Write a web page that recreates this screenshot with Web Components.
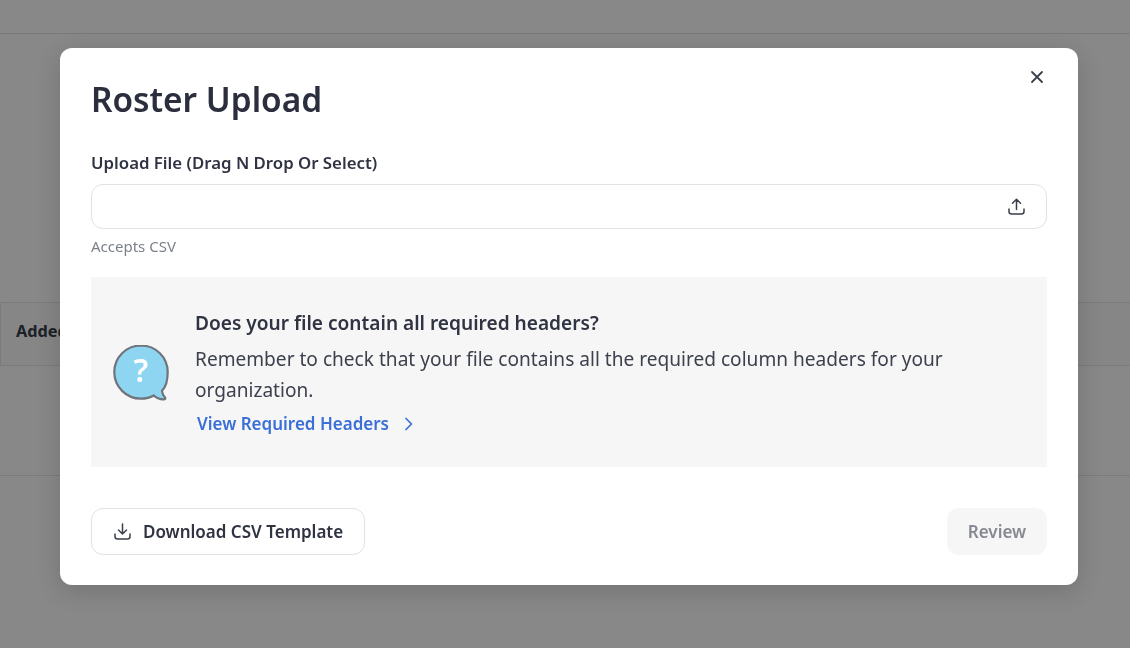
<!DOCTYPE html>
<html><head><meta charset="utf-8">
<style>
html,body{margin:0;height:100%;overflow:hidden;background:#fff;font-family:"Noto Sans","Liberation Sans",sans-serif;color:#2b2f3d}
</style></head><body>
<page-behind></page-behind>
<modal-overlay>
  <roster-modal></roster-modal>
</modal-overlay>
<script>
const F='"Noto Sans",sans-serif';
function def(name,html){
  customElements.define(name,class extends HTMLElement{
    constructor(){super();this.attachShadow({mode:'open'}).innerHTML=html;}
  });
}
def('page-behind',`<style>
:host{display:block;width:1130px;height:648px;box-sizing:border-box;background:#fff}
.top{height:33px;border-bottom:1px solid #e0e0e0;box-sizing:content-box}
.gap1{height:268px}
.row{border:1px solid #e4e4e4;border-right:0;background:#fafafa;display:flex;align-items:center;padding:0 0 6px 15px;box-sizing:content-box;height:56px;font:700 16.300px ${F};color:#2b2f3d}
.gap2{height:109px;border-bottom:1px solid #e4e4e4}
</style><div class="top"></div><div class="gap1"></div><div class="row">Added</div><div class="gap2"></div>`);
def('modal-overlay',`<style>
:host{position:fixed;inset:0;background:rgba(17,17,17,.5);display:flex;align-items:flex-start;justify-content:flex-start;padding:48px 0 0 60px;box-sizing:border-box}
</style><slot></slot>`);
def('icon-btn',`<style>:host{display:inline-flex;color:#2f3342}</style><slot></slot>`);
def('notice-box',`<style>
:host{display:flex;align-items:center;background:#f6f6f6;height:190px;box-sizing:border-box;padding:0 22px;gap:26px}
.txt{display:flex;flex-direction:column;padding-top:1px}
.h{font:600 19.100px/26px ${F};color:#2f3342}
.p{font:400 19.100px/31px ${F};color:#3d414d;width:800px;margin-top:8px}
.a{display:flex;align-items:center;gap:15px;font:600 17px/24px ${F};color:#3a6fd8;margin:6px 0 0 2px}
svg{display:block;flex:none}
.bubble{margin-top:2px}
</style>
<svg class="bubble" width="56" height="58" viewBox="0 0 56 58"><path d="M28 1.500C13.200 1.500 1.300 13.300 1.300 28S13.200 54.700 28 54.700c4.800 0 9.100-1.100 12.800-3.200 2.400 2.500 6 4 10.400 3.800 1.100-.1 1.500-1.100.8-1.900-1.700-1.800-2.900-3.800-3-6.600C53.500 42.400 54.700 35.400 54.700 28 54.700 13.300 42.800 1.500 28 1.500Z" fill="#8ed5f2" stroke="#6f747c" stroke-width="2.200"/><text x="28" y="38" text-anchor="middle" font-family="Noto Sans,sans-serif" font-weight="600" font-size="32" fill="#fff">?</text></svg>
<div class="txt"><div class="h">Does your file contain all required headers?</div>
<div class="p">Remember to check that your file contains all the required column headers for your organization.</div>
<div class="a">View Required Headers <svg width="10" height="14" viewBox="0 0 10 14" fill="none" stroke="#3a6fd8" stroke-width="1.700" stroke-linecap="round" stroke-linejoin="round"><path d="M2 1.500 7.500 7 2 12.500"/></svg></div></div>`);
def('roster-modal',`<style>
:host{display:flex;flex-direction:column;width:1018px;height:537px;box-sizing:border-box;background:#fff;border-radius:12px;padding:28px 31px 30px;position:relative;box-shadow:0 6px 24px rgba(0,0,0,.16)}
h1{margin:0;font:600 33.400px/46px ${F};color:#2b2f3d}
.close{position:absolute;top:21px;right:33px;width:16px;height:16px}
label{display:block;margin-top:31px;font:600 16.800px/20px ${F};color:#2f3342}
.input{margin-top:11px;height:45px;box-sizing:border-box;border:1.500px solid #e2e2e4;border-radius:12px;display:flex;align-items:center;justify-content:flex-end;padding-right:20px}
.hint{font:400 15px/18px ${F};color:#7c808a;margin:8px 0 22px}
.foot{margin-top:auto;display:flex;justify-content:space-between;align-items:flex-end}
.btn{height:47px;box-sizing:border-box;border-radius:12px;display:flex;align-items:center;white-space:nowrap;font:600 17px/20px ${F}}
.dl{border:1.500px solid #e2e2e4;width:274px;padding:0 0 0 21px;gap:11px;color:#2f3342}
.rv{background:#f6f6f6;color:#868991;width:100px;justify-content:center}
svg{display:block}
</style>
<h1>Roster Upload</h1>
<icon-btn class="close"><svg width="16" height="16" viewBox="0 0 16 16" fill="none" stroke="#3b3f4b" stroke-width="1.800" stroke-linecap="round"><path d="M3 3l10 10M13 3 3 13"/></svg></icon-btn>
<label>Upload File (Drag N Drop Or Select)</label>
<div class="input"><svg width="19" height="19" viewBox="0 0 19 19" fill="none" stroke="#3b3f4b" stroke-width="1.500" stroke-linecap="round" stroke-linejoin="round"><path d="M9.500 12.500V2.500M5.500 6.300l4-4 4 4M2 12v2.500A2.500 2.500 0 0 0 4.500 17h10a2.500 2.500 0 0 0 2.500-2.500V12"/></svg></div>
<div class="hint">Accepts CSV</div>
<notice-box></notice-box>
<div class="foot"><div class="btn dl"><svg width="19" height="19" viewBox="0 0 19 19" fill="none" stroke="#3b3f4b" stroke-width="1.500" stroke-linecap="round" stroke-linejoin="round"><path d="M9.500 2v10M5.500 8l4 4 4-4M2 12v2.500A2.500 2.500 0 0 0 4.500 17h10a2.500 2.500 0 0 0 2.500-2.500V12"/></svg>Download CSV Template</div><div class="btn rv">Review</div></div>`);
</script></body></html>
